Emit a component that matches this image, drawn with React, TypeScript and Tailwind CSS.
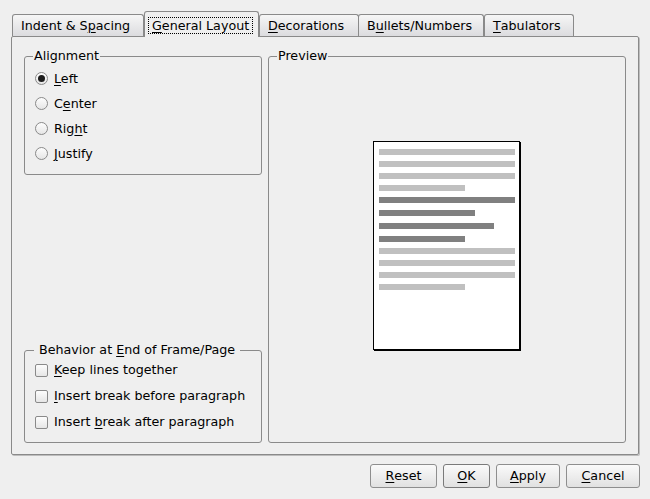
import React from "react";

function Mn({ children }: { children: React.ReactNode }) {
  return <u className="underline decoration-1 underline-offset-[2px]">{children}</u>;
}

function Radio({ checked, label }: { checked?: boolean; label: React.ReactNode }) {
  return (
    <div className="flex h-[25px] items-center gap-[6px]">
      <span className="flex h-[13px] w-[13px] items-center justify-center rounded-full border border-[#8a8a8a] bg-linear-to-b from-[#fdfdfd] to-[#e6e6e6]">
        {checked && <span className="h-[7px] w-[7px] rounded-full bg-[#1c1c1c]" />}
      </span>
      <span>{label}</span>
    </div>
  );
}

function Check({ label }: { label: React.ReactNode }) {
  return (
    <div className="flex h-[26px] items-center gap-[6px]">
      <span className="h-[13px] w-[13px] rounded-[2px] border border-[#8a8a8a] bg-linear-to-b from-[#fdfdfd] to-[#e6e6e6]" />
      <span>{label}</span>
    </div>
  );
}

function Tab({ label, width, active }: { label: React.ReactNode; width: string; active?: boolean }) {
  if (active) {
    return (
      <div
        className={`relative z-10 -mb-px flex h-[26px] items-start rounded-t-[3px] border border-b-0 border-[#8a8a8a] bg-[#efefef] pl-[3px] pt-[5px] ${width}`}
      >
        <span className="border border-dotted border-black px-[3px] leading-[15px]">{label}</span>
      </div>
    );
  }
  return (
    <div
      className={`flex h-[22px] items-center rounded-t-[3px] border border-b-0 border-[#8a8a8a] bg-linear-to-b from-[#f6f6f6] to-[#dcdcdf] pl-[8px] ${width}`}
    >
      {label}
    </div>
  );
}

function Button({ children, width, isDefault }: { children: React.ReactNode; width: string; isDefault?: boolean }) {
  return (
    <button
      className={`flex h-[24px] items-center justify-center rounded-[3px] border bg-linear-to-b from-[#fafafa] to-[#e1e1e1] ${
        isDefault ? "border-[#7a7a7a]" : "border-[#8e8e8e]"
      } ${width}`}
    >
      {children}
    </button>
  );
}

const light = "bg-[#c0c0c0]";
const dark = "bg-[#808080]";

export default function App() {
  return (
    <div className="h-[499px] w-[650px] overflow-hidden bg-[#efefef] font-['DejaVu_Sans',sans-serif] text-[12.7px] text-black">
      {/* tab bar */}
      <div className="flex items-end pl-[12px] pt-[11px]">
        <Tab width="w-[132px]" label={<>Indent &amp; S<Mn>p</Mn>acing</>} />
        <Tab width="w-[115px]" active label={<><Mn>G</Mn>eneral Layout</>} />
        <Tab width="w-[100px]" label={<><Mn>D</Mn>ecorations</>} />
        <div className="-ml-px">
          <Tab width="w-[126px]" label={<>B<Mn>u</Mn>llets/Numbers</>} />
        </div>
        <Tab width="w-[90px]" label={<><Mn>T</Mn>abulators</>} />
      </div>

      {/* panel */}
      <div className="mx-[11px] rounded-[2px] border border-[#8a8a8a] px-[12px] pb-[11px] pt-[12px] shadow-[1px_1px_0_#bdbdbd]">
        <div className="flex h-[394px] gap-[6px]">
          <div className="flex w-[238px] flex-col justify-between">
            <fieldset className="rounded-[3px] border border-[#8a8a8a] px-[10px] pb-[8px]">
              <legend className="-ml-[2px] px-[1px] leading-[14px]">Alignment</legend>
              <div className="pt-[3px]">
                <Radio checked label={<><Mn>L</Mn>eft</>} />
                <Radio label={<>C<Mn>e</Mn>nter</>} />
                <Radio label={<>Rig<Mn>h</Mn>t</>} />
                <Radio label={<><Mn>J</Mn>ustify</>} />
              </div>
            </fieldset>

            <fieldset className="rounded-[3px] border border-[#8a8a8a] px-[10px] pb-[7px]">
              <legend className="-ml-[1px] px-[5px] leading-[14px]">
                Behavior at <Mn>E</Mn>nd of Frame/Page
              </legend>
              <Check label={<><Mn>K</Mn>eep lines together</>} />
              <Check label={<><Mn>I</Mn>nsert break before paragraph</>} />
              <Check label={<>Insert <Mn>b</Mn>reak after paragraph</>} />
            </fieldset>
          </div>

          <fieldset className="flex flex-1 flex-col rounded-[3px] border border-[#8a8a8a] px-[10px]">
            <legend className="-ml-[2px] px-[1px] leading-[14px]">Preview</legend>
            <div className="flex flex-1 items-center justify-center pb-[14px] pr-[2px]">
              <div className="h-[209px] w-[147px] border border-black bg-white px-[5px] pt-[7px] shadow-[1px_1px_0_#000]">
                <div className="flex flex-col gap-[6px]">
                  <div className={`h-[6px] w-[136px] ${light}`} />
                  <div className={`h-[6px] w-[136px] ${light}`} />
                  <div className={`h-[6px] w-[136px] ${light}`} />
                  <div className={`h-[6px] w-[86px] ${light}`} />
                </div>
                <div className="mt-[6px] flex flex-col gap-[7px]">
                  <div className={`h-[6px] w-[136px] ${dark}`} />
                  <div className={`h-[6px] w-[96px] ${dark}`} />
                  <div className={`h-[6px] w-[115px] ${dark}`} />
                  <div className={`h-[6px] w-[86px] ${dark}`} />
                </div>
                <div className="mt-[6px] flex flex-col gap-[6px]">
                  <div className={`h-[6px] w-[136px] ${light}`} />
                  <div className={`h-[6px] w-[136px] ${light}`} />
                  <div className={`h-[6px] w-[136px] ${light}`} />
                  <div className={`h-[6px] w-[86px] ${light}`} />
                </div>
              </div>
            </div>
          </fieldset>
        </div>
      </div>

      {/* buttons */}
      <div className="mt-[9px] flex justify-end gap-[6px] pr-[10px]">
        <Button width="w-[67px]"><Mn>R</Mn>eset</Button>
        <Button width="w-[47px]" isDefault><Mn>O</Mn>K</Button>
        <Button width="w-[64px]"><Mn>A</Mn>pply</Button>
        <Button width="w-[74px]"><Mn>C</Mn>ancel</Button>
      </div>
    </div>
  );
}
